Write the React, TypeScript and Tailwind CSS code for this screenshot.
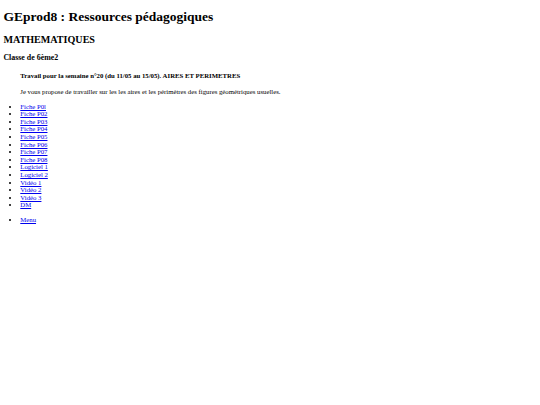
const links = [
  'Fiche P0l',
  'Fiche P02',
  'Fiche P03',
  'Fiche P04',
  'Fiche P05',
  'Fiche P06',
  'Fiche P07',
  'Fiche P08',
  'Logiciel 1',
  'Logiciel 2',
  'Vidéo 1',
  'Vidéo 2',
  'Vidéo 3',
  'DM',
]

function App() {
  return (
    <div className="min-h-[405px] bg-white px-[3.4px] pt-[9px] font-['Liberation_Serif','Times_New_Roman',serif] text-black">
      <h1 className="text-[13.5px] font-bold leading-[15.5px]">GEprod8 : Ressources pédagogiques</h1>
      <h2 className="mt-[9px] text-[10.1px] font-bold leading-[11.6px]">MATHEMATIQUES</h2>
      <h3 className="mt-[8.4px] text-[7.9px] font-bold leading-[9px]">Classe de 6ème2</h3>

      <div className="ml-[16.9px]">
        <h4 className="mt-[10px] text-[6.75px] font-bold leading-[7.7px]">
          Travail pour la semaine n°20 (du 11/05 au 15/05). AIRES ET PERIMETRES
        </h4>
        <p className="mt-[8px] text-[6.75px] leading-[7.7px]">
          Je vous propose de travailler sur les les aires et les périmètres des figures géométriques usuelles.
        </p>
      </div>

      <ul className="mt-[6.75px] list-disc pl-[16.9px] text-[6.75px] leading-[7.6px]">
        {links.map((l) => (
          <li key={l}>
            <a href="#" className="text-[#0000ee] underline">
              {l}
            </a>
          </li>
        ))}
      </ul>

      <ul className="mt-[7.5px] list-disc pl-[16.9px] text-[6.75px] leading-[7.6px]">
        <li>
          <a href="#" className="text-[#0000ee] underline">
            Menu
          </a>
        </li>
      </ul>
    </div>
  )
}

export default App
